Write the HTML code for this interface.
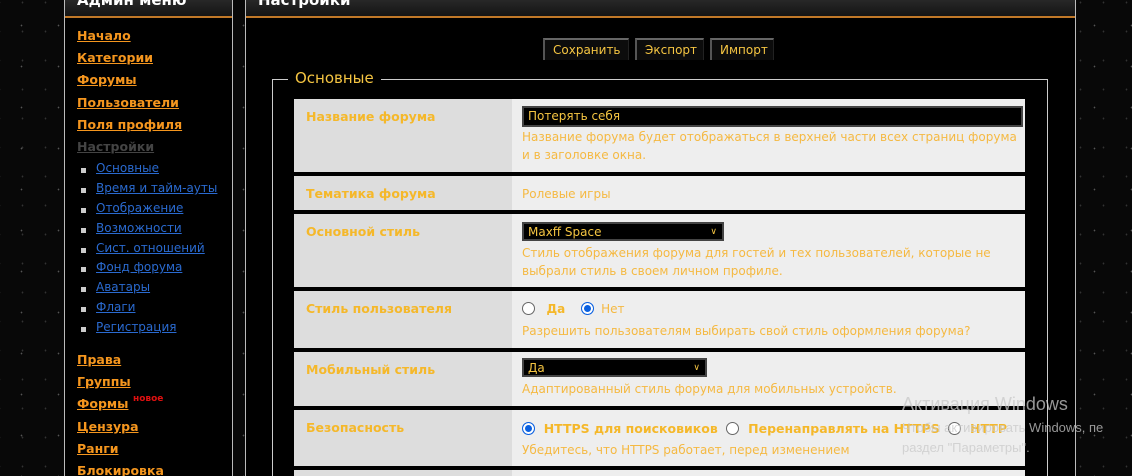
<!DOCTYPE html>
<html style="width:1132px;height:476px;overflow:hidden"><head><meta charset="utf-8"><style>
*{margin:0;padding:0;box-sizing:border-box}
body{width:1132px;height:476px;overflow:hidden;background:#080808;font-family:"DejaVu Sans","Liberation Sans",sans-serif;position:relative;
background-image:radial-gradient(#555 0.6px,transparent 1px),radial-gradient(#333 0.6px,transparent 1px);background-size:37px 41px,23px 29px;background-position:3px 5px,11px 17px}
.a{position:absolute}
.side{left:64px;top:-2px;width:169px;height:478px;background:#000;border:1px solid #bbb;border-top:none;border-bottom:none}
.hd{height:20px;background:linear-gradient(#2a2a2a,#141414);border-bottom:2px solid #c07828}
.hd span{color:#fff;font-weight:bold;font-size:15px;position:absolute;left:12px;top:-7px}
.m{position:absolute;left:12px;font-size:12.5px;font-weight:bold;color:#f5961e;text-decoration:underline}
.s{position:absolute;left:31px;font-size:12px;color:#2a6ad0;text-decoration:underline}
.s:before{content:"";position:absolute;left:-15px;top:7px;width:5px;height:5px;background:#ccc}
.main{left:245px;top:-2px;width:831px;height:478px;background:#000;border:1px solid #bbb;border-top:none;border-bottom:none}
.btn{position:absolute;top:38px;height:22px;background:#0c0c0c;border-top:2px solid #666;border-left:2px solid #555;border-right:1px solid #222;color:#f5c542;font-size:12px;line-height:20px;padding-left:8px}
.fs{left:272px;top:79px;width:776px;height:397px;border:1px solid #ccc;border-bottom:none}
.lg{left:288px;top:69px;background:#000;color:#f5c542;font-size:15px;padding:0 7px}
.row{position:absolute;left:294px;width:731px;background:#eee}
.row .l{position:absolute;left:0;top:0;bottom:0;width:218px;background:#ddd}
.lab{position:absolute;left:12px;font-size:12.5px;font-weight:bold;color:#f5b82a}
.d{position:absolute;left:228px;font-size:12px;color:#f5b942;line-height:18px}
.inp{position:absolute;left:228px;background:#000;border:2px solid #444;color:#f5c542;font-size:12px;padding-left:4px;line-height:17px}
.r{display:inline-block;width:13px;height:13px;border-radius:50%;border:1px solid #666;background:#fff;vertical-align:-2px}
.rc{border:1px solid #0a60e0;box-shadow:inset 0 0 0 2px #fff;background:#0a60e0}
</style></head><body>
<div class="a side"><div class="hd"><span>Админ меню</span></div>
<div class="m" style="top:30px">Начало</div>
<div class="m" style="top:52px">Категории</div>
<div class="m" style="top:74px">Форумы</div>
<div class="m" style="top:97px">Пользователи</div>
<div class="m" style="top:119px">Поля профиля</div>
<div class="m" style="top:141px;color:#444">Настройки</div>
<div class="s" style="top:163px">Основные</div>
<div class="s" style="top:183px">Время и тайм-ауты</div>
<div class="s" style="top:203px">Отображение</div>
<div class="s" style="top:223px">Возможности</div>
<div class="s" style="top:243px">Сист. отношений</div>
<div class="s" style="top:262px">Фонд форума</div>
<div class="s" style="top:282px">Аватары</div>
<div class="s" style="top:302px">Флаги</div>
<div class="s" style="top:322px">Регистрация</div>
<div class="m" style="top:354px">Права</div>
<div class="m" style="top:376px">Группы</div>
<div class="m" style="top:398px">Формы</div>
<div class="a" style="left:68px;top:396px;font-size:9px;font-weight:bold;color:#e01010">новое</div>
<div class="m" style="top:421px">Цензура</div>
<div class="m" style="top:443px">Ранги</div>
<div class="m" style="top:465px">Блокировка</div>
</div>
<div class="a main"><div class="hd"><span>Настройки</span></div></div>
<div class="btn" style="left:543px;width:86px">Сохранить</div>
<div class="btn" style="left:635px;width:69px">Экспорт</div>
<div class="btn" style="left:710px;width:64px">Импорт</div>
<div class="a fs"></div>
<div class="a lg">Основные</div>

<div class="row" style="top:99px;height:73px"><div class="l"></div>
<div class="lab" style="top:10px">Название форума</div>
<div class="inp" style="top:7px;width:501px;height:21px">Потерять себя</div>
<div class="d" style="top:29px">Название форума будет отображаться в верхней части всех страниц форума<br>и в заголовке окна.</div></div>

<div class="row" style="top:176px;height:34px"><div class="l"></div>
<div class="lab" style="top:10px">Тематика форума</div>
<div class="d" style="top:9px">Ролевые игры</div></div>

<div class="row" style="top:214px;height:73px"><div class="l"></div>
<div class="lab" style="top:10px">Основной стиль</div>
<div class="inp" style="top:8px;width:202px;height:19px">Maxff Space<span style="position:absolute;right:5px;font-size:9px">&#8744;</span></div>
<div class="d" style="top:30px">Стиль отображения форума для гостей и тех пользователей, которые не<br>выбрали стиль в своем личном профиле.</div></div>

<div class="row" style="top:291px;height:57px"><div class="l"></div>
<div class="lab" style="top:10px">Стиль пользователя</div>
<div class="d" style="top:9px;word-spacing:0"><span class="r"></span>&nbsp;&nbsp; <b style="color:#f5b82a">Да</b> &nbsp;&nbsp;&nbsp;<span class="r rc"></span>&nbsp; Нет</div>
<div class="d" style="top:31px">Разрешить пользователям выбирать свой стиль оформления форума?</div></div>

<div class="row" style="top:352px;height:54px"><div class="l"></div>
<div class="lab" style="top:10px">Мобильный стиль</div>
<div class="inp" style="top:6px;width:185px;height:19px">Да<span style="position:absolute;right:5px;font-size:9px">&#8744;</span></div>
<div class="d" style="top:28px">Адаптированный стиль форума для мобильных устройств.</div></div>

<div class="row" style="top:410px;height:56px"><div class="l"></div>
<div class="lab" style="top:10px">Безопасность</div>
<div class="d" style="top:10px;white-space:nowrap;font-weight:bold;font-size:12.5px;color:#f5b82a"><span class="r rc"></span>&nbsp; HTTPS для поисковиков &nbsp;<span class="r"></span>&nbsp; Перенаправлять на HTTPS &nbsp;<span class="r"></span>&nbsp; HTTP</div>
<div class="d" style="top:31px">Убедитесь, что HTTPS работает, перед изменением</div></div>
<div class="row" style="top:470px;height:6px"><div class="l"></div></div>

<div class="a" style="left:902px;top:394px;font-size:18px;color:rgba(200,200,200,.75);font-family:'Liberation Sans',sans-serif">Активация Windows</div>
<div class="a" style="left:902px;top:418px;font-size:13px;line-height:20px;color:rgba(200,200,200,.75);white-space:nowrap;font-family:'Liberation Sans',sans-serif">Чтобы активировать Windows, пе<br>раздел "Параметры".</div>
</body></html>
